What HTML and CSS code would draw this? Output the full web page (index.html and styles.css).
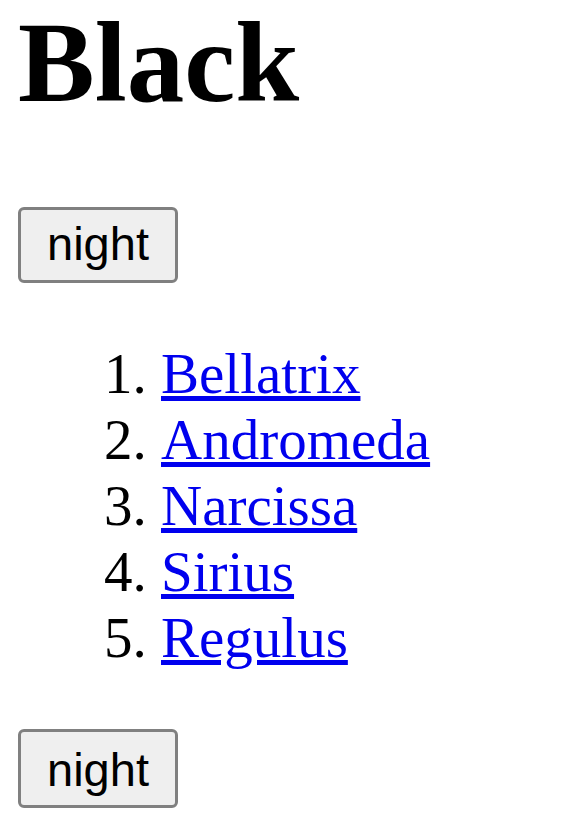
FILE: index.html
```html
<!DOCTYPE html>
<html>
<head>
<meta charset="utf-8">
<link rel="stylesheet" href="styles.css">
</head>
<body>
<h1 class="title">Black</h1>
<button class="btn">night</button>
<ol class="names">
<li><a href="#">Bellatrix</a></li>
<li><a href="#">Andromeda</a></li>
<li><a href="#">Narcissa</a></li>
<li><a href="#">Sirius</a></li>
<li><a href="#">Regulus</a></li>
</ol>
<button class="btn btn-tall">night</button>
</body>
</html>
```
FILE: styles.css
```css
html, body {
  background: #ffffff;
}
body {
  margin: 0;
  padding: 0 18px;
  font-family: "Liberation Serif", "Times New Roman", serif;
  color: #000;
}
.title {
  margin: 0 0 82px 0;
  font-size: 115px;
  line-height: 125px;
  font-weight: bold;
}
.btn {
  display: block;
  box-sizing: border-box;
  width: 160px;
  height: 76px;
  padding: 0 0 2px 0;
  margin: 0;
  font-family: "Liberation Sans", Arial, sans-serif;
  font-size: 47px;
  line-height: 54px;
  color: #000;
  background: #efefef;
  border: 3px solid #808080;
  border-radius: 6px;
}
.btn-tall {
  height: 79px;
  padding: 2px 0 0 0;
}
.names {
  margin: 58px 0;
  padding-left: 143px;
  font-size: 57px;
  line-height: 66px;
}
.names a {
  color: #0000ee;
}
```
